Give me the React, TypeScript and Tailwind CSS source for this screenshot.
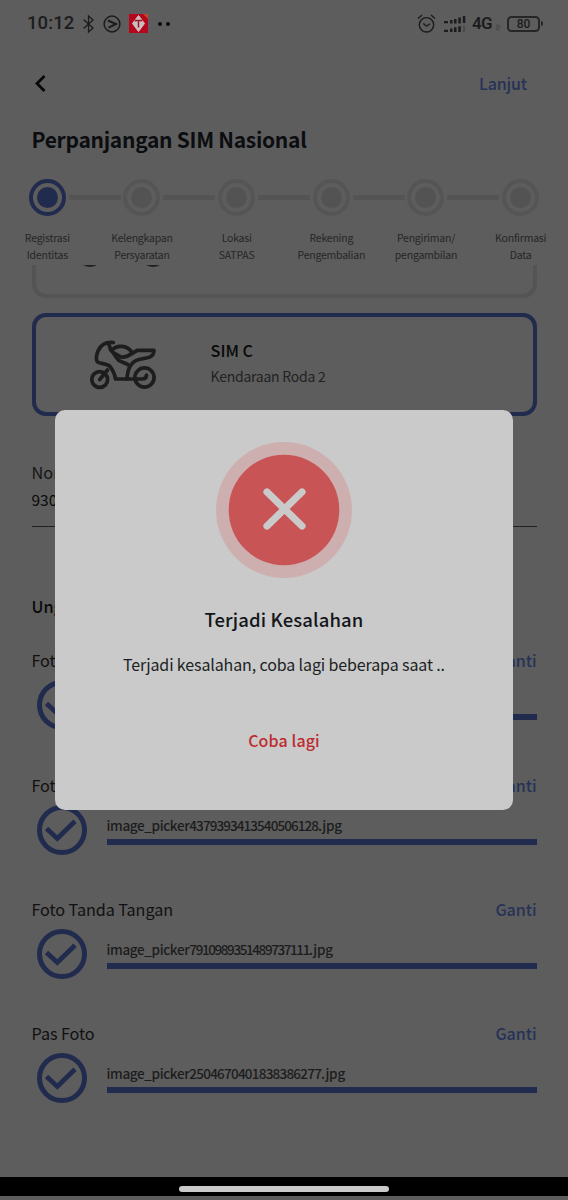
import React from "react";

const steps = [
  ["Registrasi", "Identitas"],
  ["Kelengkapan", "Persyaratan"],
  ["Lokasi", "SATPAS"],
  ["Rekening", "Pengembalian"],
  ["Pengiriman/", "pengambilan"],
  ["Konfirmasi", "Data"],
];

const uploads = [
  { label: "Foto KTP", id: "1", spacing: "tracking-[-0.900px]" },
  { label: "Foto SIM", id: "4379393413540506128", spacing: "tracking-[-0.920px]" },
  { label: "Foto Tanda Tangan", id: "7910989351489737111", spacing: "tracking-[-1.400px]" },
  { label: "Pas Foto", id: "2504670401838386277", spacing: "tracking-[-0.760px]" },
];

function StatusBar() {
  return (
    <div className="flex h-[47px] shrink-0 items-center pl-[27px] pr-[25px] text-[#1c1c1c]">
      <span className="mt-px w-[55px] font-['Roboto'] text-[18.5px] font-medium tracking-[0.1px]">10:12</span>
      <svg className="h-[20px] w-[13px]" viewBox="0 0 13 20" fill="none" stroke="currentColor" strokeWidth="1.3">
        <path d="M1.5 5.5 11 14 6.5 18V2L11 6 1.5 14.5" />
      </svg>
      <svg className="ml-[8px] h-[18px] w-[18px]" viewBox="0 0 18 18" fill="none" stroke="currentColor">
        <circle cx="9" cy="9" r="7.9" strokeWidth="1.5" />
        <path d="M5 5.500 13 9 5.500 12.700" strokeWidth="2" />
      </svg>
      <svg className="ml-[8px] h-[19px] w-[19px]" viewBox="0 0 19 19">
        <rect width="19" height="19" fill="#b5061d" />
        <path d="M14 0h5v5z" fill="#c3452a" />
        <path d="M9.5 1.500 15.500 9.5 9.5 17.500 3.500 9.5Z" fill="#c9c0c0" stroke="#c9c0c0" strokeLinejoin="round" />
        <path d="M6.5 7.500V6.500h6v1M9.5 6.500v7" fill="none" stroke="#9b1724" strokeWidth="1.5" />
      </svg>
      <span className="ml-[10px] h-[4px] w-[4px] rounded-full bg-[#0c0c0c]" />
      <span className="ml-[4px] h-[4px] w-[4px] rounded-full bg-[#0c0c0c]" />
      <svg className="ml-auto h-[19px] w-[19px]" viewBox="0 0 19 19" fill="none" stroke="currentColor" strokeWidth="1.4">
        <circle cx="9.5" cy="10.8" r="7.2" />
        <path d="M6.3 9.5 9.5 12.2 13 9.7M1 4.5 5 1M14 1l4 3.5" />
      </svg>
      <svg className="ml-[8px] h-[18px] w-[23px]" viewBox="0 0 23 18" fill="currentColor">
        <path d="M0 6h4v2.3H0zM6 5h2.5v3.5H6zM10 4h2.5v4.5H10zM14.3 2.5h2.5v6h-2.5zM18.8 1h2.5v7h-2.5zM0 14.8h4V17H0zM6 13.6h2.5V17H6zM10 12.2h2.5V17H10zM14.3 11.2h2.5V17h-2.5z" />
        <path d="M19 10.5h2v6.5h-2z" fill="#4b4b4b" />
      </svg>
      <span className="ml-[5px] mt-px font-['Roboto'] text-[17px] font-semibold tracking-[-0.600px]">4G</span>
      <svg className="ml-[3px] mt-[7px] h-[7px] w-[6px]" viewBox="0 0 6 7" fill="none" stroke="#404040" strokeWidth="0.8">
        <path d="M2 0v6L.5 4.5M4 7V1L5.500 2.500" />
      </svg>
      <span className="ml-[6px] flex h-[16px] w-[33px] items-center justify-center rounded-[4.500px] border-2 border-[#262626] font-['Roboto'] text-[12px] font-medium">80</span>
      <span className="ml-px h-[5px] w-[2px] rounded-r bg-[#262626]" />
    </div>
  );
}

function Stepper() {
  return (
    <div className="grid h-[86px] shrink-0 grid-cols-6">
      {steps.map(([a, b], i) => (
        <div key={a} className="flex flex-col items-center">
          <div className="flex h-[37px] w-full items-center justify-between">
            <span className={i === 0 ? "h-[5px] w-[26px]" : "h-[5px] w-[26px] bg-[#545454]"} />
            <span
              className={
                i === 0
                  ? "flex h-[37px] w-[37px] shrink-0 items-center justify-center rounded-full border-4 border-[#202b4e]"
                  : "flex h-[37px] w-[37px] shrink-0 items-center justify-center rounded-full border-4 border-[#555555]"
              }
            >
              <span className={i === 0 ? "h-[21px] w-[21px] rounded-full bg-[#202b4e]" : "h-[21px] w-[21px] rounded-full bg-[#535353]"} />
            </span>
            <span className={i === 5 ? "h-[5px] w-[26px]" : "h-[5px] w-[26px] bg-[#545454]"} />
          </div>
          <div className="mt-[13px] whitespace-nowrap text-center text-[10.500px] leading-[17.300px] tracking-[-0.220px] text-[#262626]">
            <div>{a}</div>
            <div>{b}</div>
          </div>
        </div>
      ))}
    </div>
  );
}

function Motorcycle() {
  return (
    <svg className="h-[50px] w-[66px]" viewBox="0 0 66 50" fill="none" stroke="#1d1d1d" strokeWidth="3.700" strokeLinecap="round" strokeLinejoin="round">
      <circle cx="9.700" cy="39.500" r="7.900" />
      <circle cx="54.500" cy="37.500" r="9.600" />
      <path d="M9.700 39.500 17.500 30" />
      <path d="M23.300 2.500C16 2 10.500 5 8 11C6 16 6 20 7.500 22C11 24 18 23.500 20.500 27C23 30.500 25 35 25.500 39H52Q56.500 39 56.500 35" />
      <path d="M19 4.500 20.700 10C24 12.500 25 17 29 20.500C32 22.500 35 22.500 38.500 25" />
      <path d="M21.500 10.500C26 5 37 4 42.300 13C38 16.500 35 17.500 31 17L25 13.500" />
      <path d="M42.300 13.300 47.300 10.300H64C64 14 62 16.500 58.500 17.500L49 19.500C41 21.500 37.500 28 37 39" />
    </svg>
  );
}

function CheckCircle() {
  return (
    <svg className="h-[50px] w-[50px] shrink-0" viewBox="0 0 50 50" fill="none" stroke="#202b4e">
      <circle cx="25" cy="25" r="22.500" strokeWidth="5" />
      <path d="M9.500 23.500 20.300 33.500 38 16.300" strokeWidth="4.800" />
    </svg>
  );
}

function Upload({ label, id, spacing }: { label: string; id: string; spacing: string }) {
  return (
    <div className="h-[124.300px] shrink-0">
      <div className="flex h-[26px] items-center justify-between leading-[26px]">
        <span className="text-[16.200px] tracking-[-0.080px] text-[#111111]">{label}</span>
        <span className="text-[16px] font-medium tracking-[-0.050px] text-[#263257]">Ganti</span>
      </div>
      <div className="mt-[7px] flex h-[50px] pl-[5px]">
        <CheckCircle />
        <div className="ml-[20px] flex-1">
          <div className="mt-[10px] h-[20px] text-[13.500px] font-medium leading-[20px] text-[#1c1c1c]">
            <span className="tracking-[-0.360px]">image_picker</span>
            <span className={spacing}>{id}</span>
            <span className="tracking-[-0.200px]">.jpg</span>
          </div>
          <div className="mt-[4px] h-[6px] bg-[#202b4e]" />
        </div>
      </div>
    </div>
  );
}

function ErrorDialog() {
  return (
    <div className="absolute left-[55px] top-[410px] flex h-[399.500px] w-[458px] flex-col items-center rounded-[10px] bg-[#cacaca] pt-[31.500px]">
      <svg className="h-[136px] w-[136px] shrink-0" viewBox="0 0 136 136">
        <circle cx="68" cy="68" r="68" fill="#ceafb0" />
        <circle cx="68" cy="68" r="55.300" fill="#c85456" />
        <path d="M51 50 86 84M86 50 51 84" stroke="#cacaca" strokeWidth="7.200" strokeLinecap="round" />
      </svg>
      <div className="mt-[26px] h-[30px] text-[18.500px] font-medium leading-[30px] tracking-[0.120px] text-[#14161b]">Terjadi Kesalahan</div>
      <div className="mt-[15px] h-[30px] text-[16px] leading-[30px] tracking-[-0.120px] text-[#1d1f24]">Terjadi kesalahan, coba lagi beberapa saat ..</div>
      <div className="mt-[46px] h-[30px] text-[16px] font-medium leading-[30px] tracking-[0.120px] text-[#bd2c2f]">Coba lagi</div>
    </div>
  );
}

export default function App() {
  return (
    <div className="relative flex h-[1200px] w-[568px] flex-col overflow-hidden bg-[#5d5d5d] font-['Noto_Sans_CJK_JP',sans-serif]">
      <StatusBar />
      <div className="flex h-[73px] shrink-0 items-center justify-between pl-[35px] pr-[41px]">
        <svg className="h-[17px] w-[11px]" viewBox="0 0 11 17" fill="none" stroke="#080808" strokeWidth="2.800">
          <path d="M9.500 1 2 8.500 9.500 16" />
        </svg>
        <span className="-mt-[2px] text-[16px] font-medium tracking-[-0.150px] text-[#263257]">Lanjut</span>
      </div>
      <h1 className="-mt-px h-[60px] shrink-0 pl-[31.500px] text-[21px] font-bold leading-[40px] tracking-[-0.290px] text-[#0c0d10]">Perpanjangan SIM Nasional</h1>
      <Stepper />
      <div className="flex h-[912px] shrink-0 flex-col overflow-hidden px-[31.500px]">
        <div className="relative h-[33px] shrink-0 overflow-hidden">
          <div className="-mt-[67px] h-[100px] rounded-[14px] border-4 border-[#545454]" />
          <svg className="absolute left-[50px] top-0 h-[3px] w-[80px]" viewBox="0 0 80 3" fill="#222222">
            <path d="M1 0H15Q8 4 1 0M64 0H78Q71 4 64 0" />
          </svg>
        </div>
        <div className="mt-[15px] flex h-[103px] shrink-0 items-center rounded-[14px] border-4 border-[#202b4e] pl-[54px]">
          <Motorcycle />
          <div className="-mt-[3px] ml-[55px]">
            <div className="h-[26px] text-[16.300px] font-medium leading-[26px] text-[#090909]">SIM C</div>
            <div className="h-[26px] text-[14px] leading-[26px] tracking-[-0.250px] text-[#222222]">Kendaraan Roda 2</div>
          </div>
        </div>
        <div className="mt-[42px] h-[28px] text-[16.300px] leading-[28px] text-[#161616]">Nomor SIM</div>
        <div className="h-[28px] text-[15.500px] leading-[27px] text-[#0a0a0a]">930</div>
        <div className="mt-[12px] h-px shrink-0 bg-[#202020]" />
        <div className="mt-[65px] h-[28px] shrink-0 text-[16.300px] font-medium leading-[28px] text-[#0a0a0a]">Unggah</div>
        <div className="mt-[27.400px]">
          {uploads.map((u) => (
            <Upload key={u.label} label={u.label} id={u.id} spacing={u.spacing} />
          ))}
        </div>
      </div>
      <div className="flex h-[19px] shrink-0 items-center justify-center bg-black pt-[4px]">
        <span className="h-[6px] w-[210px] rounded-full bg-[#cacaca]" />
      </div>
      <ErrorDialog />
    </div>
  );
}
